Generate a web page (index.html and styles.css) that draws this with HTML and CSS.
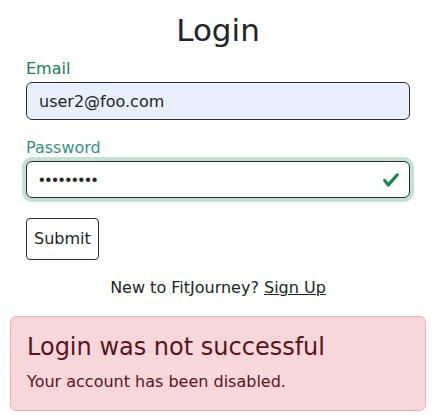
FILE: index.html
```html
<!DOCTYPE html>
<html lang="en">
<head>
<meta charset="utf-8">
<title>Login</title>
<link rel="stylesheet" href="styles.css">
</head>
<body>
<main class="page">
  <h1 class="title">Login</h1>
  <form class="form">
    <div class="field">
      <label class="label label-email" for="email">Email</label>
      <input class="control control-autofill" id="email" type="email" value="user2@foo.com">
    </div>
    <div class="field field-last">
      <label class="label label-password" for="password">Password</label>
      <div class="control-wrap">
        <input class="control control-valid" id="password" type="password" value="123456789">
        <svg class="valid-icon" viewBox="0 0 8 8" width="18" height="18" aria-hidden="true"><path fill="#198754" d="M2.3 6.73.6 4.53c-.4-1.04.46-1.4 1.1-.8l1.1 1.4 3.4-3.8c.6-.63 1.6-.27 1.2.7l-4 4.6c-.43.5-.8.4-1.1.1z"/></svg>
      </div>
    </div>
    <button class="btn" type="button">Submit</button>
    <p class="signup">New to FitJourney? <a href="#" class="signup-link">Sign Up</a></p>
  </form>
  <div class="alert">
    <h4 class="alert-heading">Login was not successful</h4>
    <p class="alert-text">Your account has been disabled.</p>
  </div>
</main>
</body>
</html>
```
FILE: styles.css
```css
* { box-sizing: border-box; }
html, body { margin: 0; padding: 0; background: #fff; }
body {
  font-family: "DejaVu Sans", "Noto Sans", sans-serif;
  font-size: 16px;
  line-height: 1.5;
  color: #212529;
}
.page {
  padding: 11px 8px 0 10px;
}
.title {
  margin: 0 0 8px;
  font-size: 31px;
  font-weight: 400;
  line-height: 38.4px;
  text-align: center;
}
.form {
  margin: 0 16px;
}
.field { margin-bottom: 16px; }
.field-last { margin-bottom: 20px; }
.label {
  display: block;
  line-height: 24px;
  margin-bottom: 1px;
}
.label-email { color: #1e7a62; }
.label-password { color: #3a8f86; }
.control {
  display: block;
  width: 100%;
  height: 37.5px;
  padding: 6px 12px;
  font-family: inherit;
  font-size: 16px;
  line-height: 24px;
  color: #212529;
  background: #fff;
  border: 1px solid #2b2f33;
  border-radius: 6px;
  outline: none;
}
.control-autofill { background: #e8f0fe; }
.control-wrap { position: relative; }
.control-valid {
  padding-right: 36px;
  box-shadow: 0 0 0 4px rgba(25, 135, 84, 0.25);
  font-family: "Liberation Sans", sans-serif;
  letter-spacing: 1px;
}
.valid-icon {
  position: absolute;
  right: 10px;
  top: 50%;
  transform: translateY(-50%);
}
.btn {
  display: block;
  height: 42px;
  padding: 8px 7px;
  font-family: inherit;
  font-size: 16px;
  line-height: 24px;
  color: #212529;
  background: #fff;
  border: 1px solid #2b2f33;
  border-radius: 4px;
}
.signup {
  margin: 16px 0;
  text-align: center;
  line-height: 24px;
}
.signup-link { color: #212529; text-decoration: underline; }
.alert {
  padding: 16px;
  background: #f8d7da;
  border: 1px solid #f1aeb5;
  border-radius: 6px;
  color: #58151c;
}
.alert-heading {
  margin: 0 0 8px;
  font-size: 24px;
  font-weight: 400;
  line-height: 1.2;
}
.alert-text {
  margin: 0;
  line-height: 24px;
}
```
